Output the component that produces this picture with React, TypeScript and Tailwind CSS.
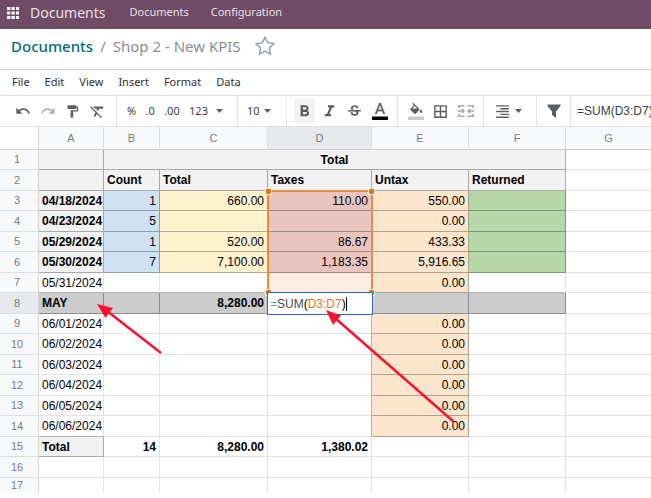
import type { ReactNode } from "react";
import {
  MdBorderAll,
  MdFormatAlignRight,
  MdFormatBold,
  MdFormatClear,
  MdFormatItalic,
  MdFormatPaint,
  MdRedo,
  MdStrikethroughS,
  MdUndo,
} from "react-icons/md";

type Cell = {
  text?: string;
  fill?: string;
  bold?: boolean;
  align?: "left" | "right" | "center";
  span?: number;
};

const HEAD = "bg-[#f2f2f2]";
const BLUE = "bg-[#cfe2f3]";
const YELLOW = "bg-[#fff2cc]";
const ROSE = "bg-[#eac5c0]";
const ORANGE = "bg-[#fce5cd]";
const GREEN = "bg-[#b6d7a8]";
const GREY = "bg-[#cccccc]";

const columns = ["A", "B", "C", "D", "E", "F", "G"];

const head = (text = ""): Cell => ({ text, fill: HEAD, bold: true });
const num = (text: string, fill?: string, bold = false): Cell => ({
  text,
  fill,
  bold,
  align: "right",
});

function salesRow(date: string, count: string, total: string, taxes: string, untax: string): Cell[] {
  return [
    head(date),
    num(count, BLUE),
    num(total, YELLOW),
    num(taxes, ROSE),
    num(untax, ORANGE),
    { fill: GREEN },
    {},
  ];
}

function emptyDay(date: string): Cell[] {
  return [{ text: date }, {}, {}, {}, num("0.00", ORANGE), {}, {}];
}

const blank: Cell[] = [{}, {}, {}, {}, {}, {}, {}];

const rows: Cell[][] = [
  [head(), { text: "Total", fill: HEAD, bold: true, align: "center", span: 5 }, {}],
  [head(), head("Count"), head("Total"), head("Taxes"), head("Untax"), head("Returned"), {}],
  salesRow("04/18/2024", "1", "660.00", "110.00", "550.00"),
  salesRow("04/23/2024", "5", "", "", "0.00"),
  salesRow("05/29/2024", "1", "520.00", "86.67", "433.33"),
  salesRow("05/30/2024", "7", "7,100.00", "1,183.35", "5,916.65"),
  [{ text: "05/31/2024" }, {}, {}, { fill: "bg-[#fdede0]" }, num("0.00", ORANGE), {}, {}],
  [
    { text: "MAY", fill: GREY, bold: true },
    { fill: GREY },
    num("8,280.00", GREY, true),
    { fill: GREY },
    { fill: GREY },
    { fill: GREY },
    {},
  ],
  emptyDay("06/01/2024"),
  emptyDay("06/02/2024"),
  emptyDay("06/03/2024"),
  emptyDay("06/04/2024"),
  emptyDay("06/05/2024"),
  emptyDay("06/06/2024"),
  [head("Total"), num("14", "", true), num("8,280.00", "", true), num("1,380.02", "", true), {}, {}, {}],
  blank,
  blank,
];

const alignClass = { left: "text-left", right: "text-right", center: "text-center" };

// A merged cell covers several columns, so look up cells by column, not by index.
function cellAt(row: number, col: number): Cell | undefined {
  let start = 0;
  for (const cell of rows[row] ?? []) {
    const end = start + (cell.span ?? 1);
    if (col >= start && col < end) return cell;
    start = end;
  }
  return undefined;
}

function borderClass(row: number, col: number, cell: Cell) {
  const last = col + (cell.span ?? 1) - 1;
  const right = cell.fill || cellAt(row, last + 1)?.fill;
  const bottom = cell.fill || cellAt(row + 1, col)?.fill;
  return `${right ? "border-r-black/30" : "border-r-[#e2e3e3]"} ${
    bottom ? "border-b-black/30" : "border-b-[#e2e3e3]"
  }`;
}

function rowHeight(row: number) {
  if (row === rows.length - 1) return "h-[15px]";
  return row % 2 === 0 ? "h-5" : "h-[21px]";
}

function RangeHighlight() {
  const handle = "absolute size-[7px] border border-white bg-[#ed7611]";
  return (
    <div className="pointer-events-none absolute -top-px -right-0.5 -left-px z-10 h-[104px] border-2 border-[#ed8a3c]">
      <span className={`${handle} -top-1 -left-1`} />
      <span className={`${handle} -top-1 -right-1`} />
      <span className={`${handle} -bottom-1 -left-1`} />
      <span className={`${handle} -right-1 -bottom-1`} />
    </div>
  );
}

function CellEditor() {
  return (
    <div
      role="textbox"
      aria-label="Cell D8"
      contentEditable
      suppressContentEditableWarning
      className="absolute -top-px -right-0.5 -bottom-0.5 -left-px z-20 flex items-center border border-[#3266ca] bg-white pl-0.5 whitespace-nowrap text-[#4a4a4a] outline-none"
    >
      <span className="text-[#4aa8a8]">=</span>
      <span>SUM</span>
      <span className="text-black">(</span>
      <span className="text-[#ed7611]">D3:D7</span>
      <span className="text-black">)</span>
      <span className="h-3.5 w-px bg-black" />
    </div>
  );
}

function Arrows() {
  return (
    <svg
      aria-hidden="true"
      className="pointer-events-none absolute top-0 left-0 z-30"
      width="480"
      height="310"
      viewBox="0 0 480 310"
      fill="#fb1230"
      stroke="#fb1230"
    >
      <path d="M161 226 L107 184" strokeWidth="2.500" />
      <path d="M97 177 L113 181 L105.500 191 Z" stroke="none" />
      <path d="M454 295 L335 191" strokeWidth="2.500" />
      <path d="M326 183 L341 188.500 L333 198 Z" stroke="none" />
    </svg>
  );
}

function Sheet() {
  return (
    <div className="relative">
      <table className="w-full table-fixed border-separate border-spacing-0 font-['Liberation_Sans',Arial,sans-serif] text-xs leading-4 text-black">
        <colgroup>
          <col className="w-[39px]" />
          <col className="w-[65px]" />
          <col className="w-[56px]" />
          <col className="w-[108px]" />
          <col className="w-[104px]" />
          <col className="w-[97px]" />
          <col className="w-[97px]" />
          <col />
        </colgroup>
        <thead>
          <tr className="h-[23px] text-[11px] text-[#777b80]">
            <td className="border-r border-b border-[#d3d5d8] p-0" />
            {columns.map((name) => (
              <th
                key={name}
                scope="col"
                className={`border-r border-b border-r-[#dcdee0] border-b-[#cccccc] p-0 font-normal last:border-r-0 ${
                  name === "D" ? "bg-[#e7e9ed]" : "bg-[#f8f9fb]"
                }`}
              >
                {name}
              </th>
            ))}
          </tr>
        </thead>
        <tbody>
          {rows.map((cells, row) => {
            const bottom = row === rows.length - 1 ? "border-b-0" : "border-b";
            let next = 0;
            return (
              <tr key={row} className={rowHeight(row)}>
                <th
                  scope="row"
                  className={`border-r border-r-[#d3d5d8] border-b-[#dcdee0] px-0 pt-0 pr-1 pb-px text-[11px] leading-[14px] font-normal text-[#777b80] ${bottom} ${
                    row === 7 ? "bg-[#e7e9ed]" : "bg-[#f8f9fb]"
                  }`}
                >
                  {row + 1}
                </th>
                {cells.map((cell) => {
                  const col = next;
                  next += cell.span ?? 1;
                  return (
                    <td
                      key={col}
                      colSpan={cell.span}
                      className={`relative border-r px-[3px] py-0 whitespace-nowrap last:border-r-0 ${bottom} ${borderClass(
                        row,
                        col,
                        cell,
                      )} ${cell.fill ?? ""} ${cell.bold ? "font-bold" : ""} ${
                        alignClass[cell.align ?? "left"]
                      }`}
                    >
                      {cell.text}
                      {row === 2 && col === 3 && <RangeHighlight />}
                      {row === 7 && col === 3 && <CellEditor />}
                    </td>
                  );
                })}
              </tr>
            );
          })}
        </tbody>
      </table>
      <Arrows />
    </div>
  );
}

function Tool({ label, active, children }: { label: string; active?: boolean; children: ReactNode }) {
  return (
    <button
      type="button"
      aria-label={label}
      className={`flex h-[26px] w-[21px] items-center justify-center rounded-xs ${
        active ? "bg-[#f1f3f4]" : ""
      }`}
    >
      {children}
    </button>
  );
}

function Caret() {
  return (
    <svg width="7" height="4" viewBox="0 0 7 4" fill="#5c5f61" aria-hidden="true">
      <path d="M0 0h7L3.500 4z" />
    </svg>
  );
}

function Toolbar() {
  const group = "flex shrink-0 items-center border-r border-[#e0e2e4]";
  return (
    <div className="flex h-[31px] border-b border-[#dcdee0] text-[#5c5f61]">
      <div className={`${group} gap-1 pr-2 pl-3`}>
        <Tool label="Undo">
          <MdUndo size={16} />
        </Tool>
        <Tool label="Redo">
          <MdRedo size={16} className="text-[#adafb0]" />
        </Tool>
        <Tool label="Paint format">
          <MdFormatPaint size={15} />
        </Tool>
        <Tool label="Clear format">
          <MdFormatClear size={17} />
        </Tool>
      </div>
      <div className={`${group} w-[121px] justify-between pr-3.5 pl-2.5 text-[11px] text-[#3c4043]`}>
        <button type="button">%</button>
        <button type="button">.0</button>
        <button type="button">.00</button>
        <button type="button" className="flex items-center gap-2">
          123 <Caret />
        </button>
      </div>
      <div className={`${group} w-[49px] pl-[9px] text-[11px] text-[#3c4043]`}>
        <button type="button" aria-label="Font size" className="flex items-center gap-1">
          10 <Caret />
        </button>
      </div>
      <div className={`${group} gap-1 px-[7px]`}>
        <Tool label="Bold" active>
          <MdFormatBold size={19} />
        </Tool>
        <Tool label="Italic">
          <MdFormatItalic size={19} />
        </Tool>
        <Tool label="Strikethrough">
          <MdStrikethroughS size={17} />
        </Tool>
        <Tool label="Text color">
          <svg width="16" height="18" viewBox="0 0 16 18" aria-hidden="true">
            <path
              fill="currentColor"
              stroke="currentColor"
              strokeWidth=".3"
              d="M7.200 1h1.600l4.200 11h-1.700l-1-2.800H5.700l-1 2.800H3zM6.200 7.800h3.600L8 2.900z"
            />
            <path fill="#000" d="M0 14.500h16v3.500H0z" />
          </svg>
        </Tool>
      </div>
      <div className={`${group} gap-1 px-[7px]`}>
        <Tool label="Fill color">
          <svg width="16" height="18" viewBox="0 0 16 18" aria-hidden="true">
            <path
              fill="currentColor"
              fillRule="evenodd"
              d="M4.300 1.600l.9-.9 6.100 6.200a.9.900 0 0 1 0 1.200l-3.600 3.600a.9.900 0 0 1-1.300 0L2.500 7.900a.9.900 0 0 1 0-1.200L5.700 3.200zM6.600 4.100L4.300 6.600h4.800zM13 7.200s1.300 1.500 1.300 2.400a1.300 1.300 0 0 1-2.600 0c0-.9 1.300-2.400 1.300-2.400z"
            />
            <path fill="#c9c9c9" d="M0 14.500h16V18H0z" />
          </svg>
        </Tool>
        <Tool label="Borders">
          <MdBorderAll size={17} />
        </Tool>
        <Tool label="Merge cells">
          <svg
            width="16"
            height="14"
            viewBox="0 0 16 14"
            fill="none"
            stroke="#a3a5a6"
            strokeWidth="1.600"
            aria-hidden="true"
          >
            <path d="M1 4V1.800h5.500M9.500 1.800H15V4M1 10v2.200h5.500M9.500 12.200H15V10" />
            <path d="M0 7h5.500M16 7h-5.500M4 5l2 2-2 2M12 5l-2 2 2 2" strokeWidth="1.400" />
          </svg>
        </Tool>
      </div>
      <div className={`${group} w-[53px] pl-2.5`}>
        <button type="button" aria-label="Horizontal align" className="flex items-center gap-1">
          <MdFormatAlignRight size={17} /> <Caret />
        </button>
      </div>
      <div className={`${group} px-1.5`}>
        <Tool label="Filter">
          <svg width="14" height="14" viewBox="0 0 14 14" fill="currentColor" aria-hidden="true">
            <path d="M.5.500h13v1.500L9 7.500V14L5 11V7.500L.5 2z" />
          </svg>
        </Tool>
      </div>
      <input
        aria-label="Formula"
        defaultValue="=SUM(D3:D7)"
        className="min-w-0 flex-1 pl-1.5 font-['Liberation_Sans',Arial,sans-serif] text-xs text-[#3c4043] outline-none"
      />
    </div>
  );
}

const menus = ["File", "Edit", "View", "Insert", "Format", "Data"];

export default function App() {
  return (
    <div className="overflow-hidden bg-white font-['Noto_Sans',sans-serif]">
      <header className="flex h-[29px] items-center bg-[#6f4c65] pb-1 text-[11px] text-[#e9e1e7]">
        <button type="button" aria-label="Apps" className="ml-[7px]">
          <svg width="12" height="12" viewBox="0 0 12 12" fill="#fff" aria-hidden="true">
            {[0, 4.5, 9].map((y) =>
              [0, 4.5, 9].map((x) => <rect key={`${x}-${y}`} x={x} y={y} width="3.300" height="3" />),
            )}
          </svg>
        </button>
        <a href="#documents" className="ml-[11px] text-sm">
          Documents
        </a>
        <nav className="ml-6 flex gap-[22px]">
          <a href="#documents">Documents</a>
          <a href="#configuration">Configuration</a>
        </nav>
      </header>

      <div className="flex h-[41px] items-center border-b border-[#c9ccd2] pb-1.5 pl-[11px] text-[15px] text-[#8a8d91]">
        <a href="#documents" className="font-medium text-[#017076]">
          Documents
        </a>
        <span className="mx-[7px]">/</span>
        <span>Shop 2 - New KPIS</span>
        <button type="button" aria-label="Add to favorites" className="ml-3.5">
          <svg
            width="20"
            height="20"
            viewBox="0 0 20 20"
            fill="none"
            stroke="#9a9fae"
            strokeWidth="1.500"
            aria-hidden="true"
          >
            <path d="M10 1.200l2.700 5.700 6.200.8-4.500 4.300 1.100 6.200-5.500-3-5.500 3 1.100-6.200-4.500-4.300 6.200-.8z" />
          </svg>
        </button>
      </div>

      <div className="flex h-[26px] items-center gap-[15px] border-b border-[#e0e2e4] pl-3 text-[11px] text-[#2c2f33]">
        {menus.map((name) => (
          <button key={name} type="button">
            {name}
          </button>
        ))}
      </div>

      <Toolbar />
      <Sheet />
    </div>
  );
}
